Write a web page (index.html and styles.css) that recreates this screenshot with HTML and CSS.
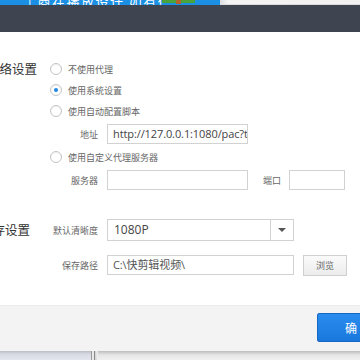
FILE: index.html
```html
<!DOCTYPE html>
<html>
<head>
<meta charset="utf-8">
<link rel="stylesheet" href="styles.css">
</head>
<body>
<div class="page">
  <div class="topstrip">
    <div class="bluebar">
      <span class="toptext">| 商在播放设计 如有侵权</span>
      <span class="greenbar"><span class="orangedot"></span></span>
    </div>
    <div class="graybar"></div>
  </div>
  <div class="header"></div>
  <div class="content">
    <div class="section net">
      <div class="sec-label net-label">网络设置</div>
      <div class="sec-body">
        <div class="opt-row"><span class="radio"></span><span class="opt-text">不使用代理</span></div>
        <div class="opt-row r2"><span class="radio checked"></span><span class="opt-text">使用系统设置</span></div>
        <div class="opt-row"><span class="radio"></span><span class="opt-text">使用自动配置脚本</span></div>
        <div class="field-row">
          <span class="sub-label">地址</span>
          <span class="input addr">http://127.0.0.1:1080/pac?t=20190101</span>
        </div>
        <div class="opt-row"><span class="radio"></span><span class="opt-text">使用自定义代理服务器</span></div>
        <div class="field-row">
          <span class="sub-label">服务器</span>
          <span class="input server"></span>
          <span class="port-label">端口</span>
          <span class="input port"></span>
        </div>
      </div>
    </div>
    <div class="section store">
      <div class="sec-label store-label">保存设置</div>
      <div class="sec-body">
        <div class="field-row">
          <span class="sub-label">默认清晰度</span>
          <span class="select"><span class="select-val">1080P</span><span class="select-btn"><span class="arrow"></span></span></span>
        </div>
        <div class="field-row path-row">
          <span class="sub-label">保存路径</span>
          <span class="input path">C:\快剪辑视频\</span>
          <span class="browse">浏览</span>
        </div>
      </div>
    </div>
  </div>
  <div class="footer">
    <span class="ok">确定</span>
  </div>
  <div class="below">
    <div class="below-left"></div>
    <div class="below-lines"></div>
    <div class="below-right"></div>
  </div>
</div>
</body>
</html>
```
FILE: styles.css
```css
html, body {
  margin: 0;
  padding: 0;
}
body {
  width: 360px;
  height: 360px;
  overflow: hidden;
  font-family: "Noto Sans CJK SC", "Noto Sans", sans-serif;
  background: #fff;
}
.page {
  width: 360px;
  height: 360px;
  display: flex;
  flex-direction: column;
  overflow: hidden;
}
.topstrip {
  height: 5px;
  display: flex;
  overflow: hidden;
  flex: none;
}
.bluebar {
  width: 220px;
  background: #1b8fe3;
  display: flex;
  align-items: flex-end;
  overflow: hidden;
}
.toptext {
  color: #fff;
  font-size: 13px;
  line-height: 13px;
  margin-left: 28px;
  margin-bottom: -3px;
  letter-spacing: 1.5px;
  white-space: nowrap;
  width: 134px;
  overflow: hidden;
}
.greenbar {
  width: 33px;
  height: 3px;
  background: #4aa43a;
  align-self: flex-start;
  display: flex;
  justify-content: center;
}
.orangedot {
  width: 5px;
  height: 4px;
  background: #b5622a;
}
.graybar {
  flex: 1;
  background: linear-gradient(to right, #d9dde2, #f4f4f4 8px, #f2f2f2);
  border-bottom: 1px solid #dcdcdc;
}
.header {
  height: 27px;
  flex: none;
  background: #3e4551;
}
.content {
  height: 273px;
  flex: none;
  box-sizing: border-box;
  padding-top: 26px;
}
.section {
  display: flex;
}
.sec-label {
  width: 50px;
  flex: none;
  font-size: 12.5px;
  color: #333;
  white-space: nowrap;
  line-height: 22px;
}
.net-label {
  text-indent: -13px;
}
.store-label {
  text-indent: -20px;
  line-height: 24px;
}
.store {
  margin-top: 26px;
}
.sec-body {
  display: flex;
  flex-direction: column;
}
.opt-row {
  height: 22px;
  display: flex;
  align-items: center;
}
.opt-row.r2 {
  height: 20px;
}
.radio {
  width: 10px;
  height: 10px;
  border: 1px solid #c4c4c4;
  border-radius: 50%;
  background: #fff;
  box-sizing: content-box;
  display: flex;
  align-items: center;
  justify-content: center;
  box-shadow: inset 0 1px 1px rgba(0,0,0,0.06);
}
.radio.checked::after {
  content: "";
  width: 4px;
  height: 4px;
  border-radius: 50%;
  background: #1e88e5;
}
.opt-text {
  margin-left: 6px;
  font-size: 9px;
  color: #666;
}
.field-row {
  height: 24px;
  display: flex;
  align-items: center;
}
.path-row {
  margin-top: 11px;
}
.sub-label {
  width: 48px;
  margin-right: 9px;
  text-align: right;
  font-size: 9px;
  color: #666;
  white-space: nowrap;
}
.input {
  height: 20px;
  box-sizing: border-box;
  border: 1px solid #d2d2d2;
  background: #fff;
  font-family: "Open Sans", "Noto Sans CJK SC", sans-serif;
  font-size: 11px;
  letter-spacing: -0.1px;
  color: #444;
  line-height: 18px;
  padding-left: 5px;
  white-space: nowrap;
  overflow: hidden;
}
.addr {
  width: 141px;
}
.server {
  width: 141px;
}
.port-label {
  margin-left: 15px;
  width: 26px;
  font-size: 9px;
  color: #666;
}
.port {
  width: 56px;
}
.select {
  width: 187px;
  height: 22px;
  box-sizing: border-box;
  border: 1px solid #d2d2d2;
  display: flex;
  background: #fff;
}
.select-val {
  flex: 1;
  font-family: "Open Sans", "Noto Sans CJK SC", sans-serif;
  font-size: 12px;
  color: #444;
  line-height: 20px;
  padding-left: 6px;
}
.select-btn {
  width: 22px;
  border-left: 1px solid #d2d2d2;
  display: flex;
  align-items: center;
  justify-content: center;
}
.arrow {
  width: 0;
  height: 0;
  border-left: 4px solid transparent;
  border-right: 4px solid transparent;
  border-top: 4px solid #555;
}
.path {
  width: 187px;
  color: #555;
}
.browse {
  margin-left: 9px;
  width: 44px;
  height: 21px;
  box-sizing: border-box;
  border: 1px solid #d0d0d0;
  background: linear-gradient(#fafafa, #ececec);
  font-size: 9px;
  color: #666;
  display: flex;
  align-items: center;
  justify-content: center;
}
.footer {
  height: 46px;
  flex: none;
  box-sizing: border-box;
  background: #f3f3f3;
  border-top: 1px solid #ebebeb;
  padding-top: 7px;
  padding-left: 317px;
  display: flex;
  align-items: flex-start;
}
.ok {
  width: 70px;
  height: 29px;
  box-sizing: border-box;
  flex: none;
  background: linear-gradient(#2a8cef, #1a78dc);
  border: 1px solid #1569c4;
  border-radius: 2px;
  color: #fff;
  font-size: 12px;
  line-height: 27px;
  padding-left: 27px;
  letter-spacing: 3px;
  white-space: nowrap;
}
.below {
  flex: 1;
  display: flex;
}
.below-left {
  width: 91px;
  background: linear-gradient(#b9bcc2, #d6d9e1 3px, #e3e6ee);
}
.below-lines {
  width: 7px;
  background: linear-gradient(to right, #9a9a9a 0, #9a9a9a 1px, #e8e8e8 1px, #e8e8e8 3px, #8a8a8a 3px, #8a8a8a 4px, #d0d0d0 4px, #f2f2f2 7px);
}
.below-right {
  flex: 1;
  background: linear-gradient(#bdbdbd, #e6e6e6 4px, #f0f0f0);
}
```
